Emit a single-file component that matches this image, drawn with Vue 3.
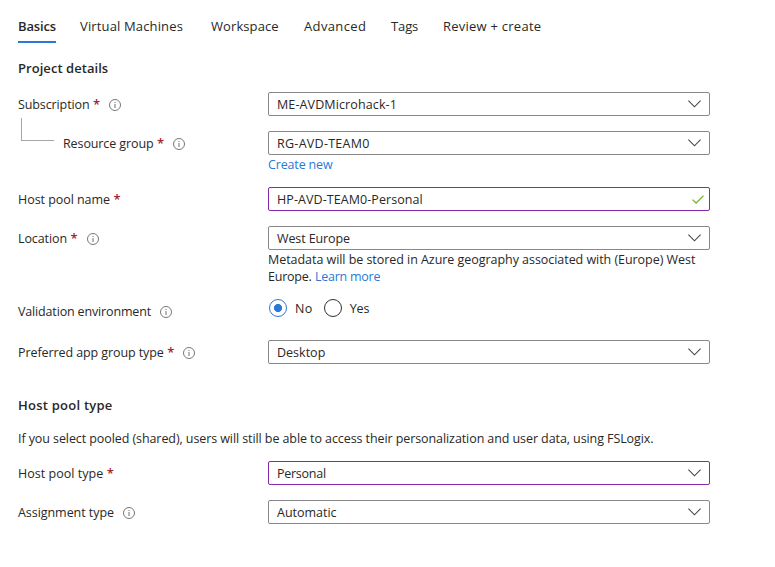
<script setup>
import { ref } from 'vue'

// Tracks a text run so that it spans the given advance width.
const vFit = {
  mounted(el, { value }) {
    const n = el.textContent.trim().length
    const w = el.getBoundingClientRect().width
    el.style.letterSpacing = `${(value - w) / n}px`
  },
}

const tabs = [
  { label: 'Basics', w: 38, active: true },
  { label: 'Virtual Machines', w: 103 },
  { label: 'Workspace', w: 67.7 },
  { label: 'Advanced', w: 62.2 },
  { label: 'Tags', w: 27.2 },
  { label: 'Review + create', w: 98.3 },
]

const project = [
  { key: 'subscription', label: 'Subscription', w: 71.5, required: true, info: true, value: 'ME-AVDMicrohack-1', vw: 120 },
  { key: 'group', label: 'Resource group', w: 90.5, required: true, info: true, value: 'RG-AVD-TEAM0', vw: 92.7, link: 'Create new' },
  { key: 'name', label: 'Host pool name', w: 92, required: true, value: 'HP-AVD-TEAM0-Personal', vw: 145.8, changed: true, valid: true },
  { key: 'location', label: 'Location', w: 49, required: true, info: true, value: 'West Europe', vw: 73 },
  { key: 'validation', label: 'Validation environment', w: 133, info: true, radio: true },
  { key: 'appgroup', label: 'Preferred app group type', w: 145.8, required: true, info: true, value: 'Desktop', vw: 48.3 },
]
const pool = [
  { key: 'type', label: 'Host pool type', w: 85.2, required: true, value: 'Personal', vw: 48.8, changed: true },
  { key: 'assignment', label: 'Assignment type', w: 96, info: true, value: 'Automatic', vw: 59.5 },
]
const sections = [
  { title: 'Project details', w: 90.2, fields: project },
  { title: 'Host pool type', w: 94.6, fields: pool, intro: 'If you select pooled (shared), users will still be able to access their personalization and user data, using FSLogix.' },
]
const validation = ref('No')
</script>

<template>
  <main class="page">
    <nav class="tabs">
      <a v-for="t in tabs" :key="t.label" class="tab" :class="{ active: t.active }"><span v-fit="t.w">{{ t.label }}</span></a>
    </nav>

    <section v-for="s in sections" :key="s.title" class="section">
      <h2 class="title"><span v-fit="s.w">{{ s.title }}</span></h2>
      <p v-if="s.intro" class="intro"><span v-fit="635.5">{{ s.intro }}</span></p>

      <div v-for="f in s.fields" :key="f.key" class="row" :class="f.key">
        <div class="label">
          <i v-if="f.key === 'group'" class="elbow"></i>
          <span v-fit="f.w">{{ f.label }}</span>
          <span v-if="f.required" class="star">*</span>
          <svg v-if="f.info" class="info" viewBox="0 0 12 12">
            <circle cx="6" cy="6" r="5.5" fill="none" stroke="#777" stroke-width="1" />
            <path d="M6 5v4M6 3v1.1" fill="none" stroke="#888" stroke-width="1.2" />
          </svg>
        </div>

        <div class="control">
          <div v-if="f.radio" class="radios">
            <label v-for="o in ['No', 'Yes']" :key="o" class="radio" :class="{ on: validation === o }" @click="validation = o">
              <i class="dot"></i><span v-fit="o === 'No' ? 17.7 : 19.5">{{ o }}</span>
            </label>
          </div>
          <div v-else class="box" :class="{ changed: f.changed }">
            <span v-fit="f.vw">{{ f.value }}</span>
            <svg v-if="f.valid" class="check" viewBox="0 0 12 9"><path d="M0.5 4.6L4.1 8L11.6 0.6" fill="none" stroke="#76b52b" stroke-width="1.3" /></svg>
            <svg v-else class="chevron" viewBox="0 0 13 8"><path d="M0.4 0.7L6.5 6.8L12.6 0.7" fill="none" stroke="#444" stroke-width="1.1" /></svg>
          </div>
          <p v-if="f.link" class="note"><a v-fit="64.5" class="link">{{ f.link }}</a></p>
          <p v-if="f.key === 'location'" class="note">
            <span v-fit="427.3">Metadata will be stored in Azure geography associated with (Europe) West</span><br />
            <span v-fit="43.5">Europe.</span><a v-fit="65.2" class="link more">Learn more</a>
          </p>
        </div>
      </div>
    </section>
  </main>
</template>

<style>
body { background: #fff; }
</style>

<style scoped>
.page {
  box-sizing: border-box;
  height: 567px;
  padding: 16px 0 0 18px;
  font: 12.5px/17px "Open Sans", "Noto Sans", sans-serif;
  color: #292827;
  white-space: nowrap;
}
.tabs {
  display: grid;
  grid-template-columns: 38px 107px 69px 63px 28px 99px;
  column-gap: 24px;
  height: 27px;
  font-size: 13px;
  line-height: 21px;
}
.tab { box-sizing: border-box; height: 27px; }
.tab.active { font-weight: 600; border-bottom: 2px solid #2b78d8; }
.title { margin: 0; font-size: 13px; line-height: 18px; font-weight: 600; }
.section { padding-top: 16px; }
.section + .section { padding-top: 32px; }
.intro { margin: 16px 0 13px; line-height: 18px; }
.row { display: grid; grid-template-columns: 250px 442px; }
.label { display: flex; align-items: center; height: 24px; }
.star { width: 6px; margin-left: 3.5px; color: #a4262c; font-size: 13px; font-weight: 600; }
.info { width: 12px; height: 12px; margin: 2px 0 0 9px; }
.star + .info { margin-left: 10px; }
.box {
  display: flex;
  align-items: center;
  justify-content: space-between;
  box-sizing: border-box;
  height: 24px;
  padding: 0 8px;
  border: 1px solid #8a8886;
  border-radius: 2px;
}
.box.changed { border-color: #8529aa; }
.chevron { width: 13px; height: 8px; }
.check { width: 12px; height: 9px; margin-right: -3px; }
.note { margin: 0; padding-top: 1px; line-height: 17px; }
.link { color: #2b78d8; }
.more { margin-left: 3.5px; }
.subscription { margin-top: 15px; }
.group { margin-top: 15px; }
.elbow {
  box-sizing: border-box;
  align-self: flex-start;
  width: 33px;
  height: 23px;
  margin: -13px 9px 0 3px;
  border: solid #a6a6a6;
  border-width: 0 0 1px 1px;
}
.name { margin-top: 14px; }
.location, .assignment { margin-top: 15px; }
.validation { margin-top: 14px; }
.validation .label { margin-bottom: 1px; }
.appgroup { margin-top: 16px; }
.radios { display: flex; gap: 11px; padding: 0; }
.radio { display: flex; align-items: center; height: 18px; }
.dot {
  box-sizing: border-box;
  width: 18px;
  height: 18px;
  margin: 0 8px 0 1px;
  border: 1px solid #323130;
  border-radius: 50%;
}
.radio + .radio { margin-left: -1px; }
.on .dot {
  border-color: #2b78d8;
  background: radial-gradient(circle, #2b78d8 3.7px, transparent 4.4px);
}
</style>
